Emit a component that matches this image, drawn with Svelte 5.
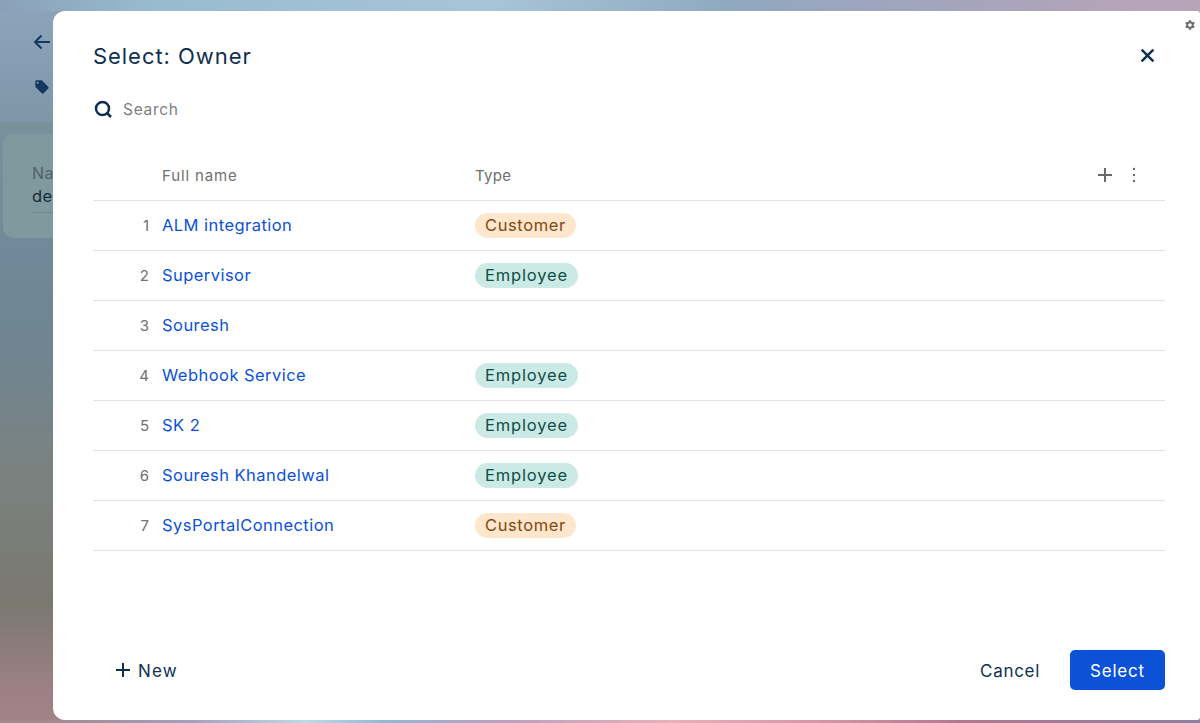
<script>
  const rows = [
    { name: 'ALM integration', type: 'Customer' },
    { name: 'Supervisor', type: 'Employee' },
    { name: 'Souresh', type: '' },
    { name: 'Webhook Service', type: 'Employee' },
    { name: 'SK 2', type: 'Employee' },
    { name: 'Souresh Khandelwal', type: 'Employee' },
    { name: 'SysPortalConnection', type: 'Customer' }
  ];
</script>

<div class="page">
  <header class="page-head">
    <svg class="back" width="20" height="20" viewBox="0 0 20 20" fill="none" stroke="#14395f" stroke-width="2">
      <path d="M18 10H3M9.500 3.500 3 10l6.500 6.500" />
    </svg>
    <svg class="tag" width="16" height="16" viewBox="0 0 24 24" fill="#14395f">
      <path d="M21.410 11.580l-9-9C12.050 2.220 11.550 2 11 2H4c-1.100 0-2 .9-2 2v7c0 .55.22 1.050.59 1.420l9 9c.36.36.86.58 1.410.58.55 0 1.050-.22 1.410-.59l7-7c.37-.36.59-.86.59-1.410 0-.55-.23-1.060-.59-1.420zM5.500 7C4.670 7 4 6.330 4 5.500S4.670 4 5.500 4 7 4.670 7 5.500 6.330 7 5.500 7z" />
    </svg>
  </header>
  <div class="page-body">
    <div class="card">
      <div class="card-label">Name</div>
      <div class="card-value">demo</div>
    </div>
  </div>

  <div class="modal">
    <div class="modal-head">
      <h2>Select: Owner</h2>
      <button class="close" title="Close" aria-label="Close">
        <svg width="15" height="15" viewBox="0 0 14 14" fill="none" stroke="#0f2f52" stroke-width="2.300">
          <path d="M1.500 1.500l11 11M12.500 1.500l-11 11" />
        </svg>
      </button>
    </div>

    <div class="search">
      <svg width="20" height="20" viewBox="0 0 20 20" fill="none" stroke="#0f2f52" stroke-width="2.500">
        <circle cx="9.500" cy="9.500" r="6.500" />
        <path d="M14 14l4 4" />
      </svg>
      <span>Search</span>
    </div>

    <div class="table">
      <div class="row head">
        <div class="num"></div>
        <div class="name">Full name</div>
        <div class="type">Type</div>
        <div class="tools">
          <svg width="16" height="16" viewBox="0 0 16 16" fill="none" stroke="#6b6b6b" stroke-width="2">
            <path d="M8 1v14M1 8h14" />
          </svg>
          <svg width="4" height="16" viewBox="0 0 4 16" fill="#6b6b6b">
            <circle cx="2" cy="2" r="1.200" />
            <circle cx="2" cy="8" r="1.200" />
            <circle cx="2" cy="14" r="1.200" />
          </svg>
        </div>
      </div>
      {#each rows as row, i}
        <div class="row">
          <div class="num">{i + 1}</div>
          <div class="name link">{row.name}</div>
          <div class="type">
            {#if row.type}
              <span class="pill" class:customer={row.type === 'Customer'} class:employee={row.type === 'Employee'}>{row.type}</span>
            {/if}
          </div>
        </div>
      {/each}
    </div>

    <div class="modal-foot">
      <button class="new">
        <svg width="16" height="16" viewBox="0 0 16 16" fill="none" stroke="#0f2f52" stroke-width="2">
          <path d="M8 1v14M1 8h14" />
        </svg>
        <span class="new-label">New</span>
      </button>
      <div class="actions">
        <button class="cancel">Cancel</button>
        <button class="select">Select</button>
      </div>
    </div>
  </div>

  <svg class="gear" width="12" height="12" viewBox="0 0 24 24" fill="#6b6b6b">
    <path d="M19.140 12.940c.04-.3.06-.61.06-.94 0-.32-.02-.64-.07-.94l2.030-1.580c.18-.14.23-.41.12-.61l-1.920-3.320c-.12-.22-.37-.29-.59-.22l-2.390.96c-.5-.38-1.030-.7-1.620-.94l-.36-2.540c-.04-.24-.24-.41-.48-.41h-3.840c-.24 0-.43.17-.47.41l-.36 2.540c-.59.24-1.130.57-1.620.94l-2.390-.96c-.22-.08-.47 0-.59.22L2.740 8.870c-.12.21-.08.47.12.61l2.030 1.580c-.05.3-.09.63-.09.94s.02.64.07.94l-2.030 1.580c-.18.14-.23.41-.12.61l1.920 3.320c.12.22.37.29.59.22l2.390-.96c.5.38 1.030.7 1.620.94l.36 2.540c.05.24.24.41.48.41h3.840c.24 0 .44-.17.47-.41l.36-2.540c.59-.24 1.130-.56 1.620-.94l2.390.96c.22.08.47 0 .59-.22l1.920-3.320c.12-.22.07-.47-.12-.61l-2.010-1.580zM12 15.600c-1.980 0-3.600-1.620-3.600-3.600s1.620-3.600 3.600-3.600 3.600 1.620 3.600 3.600-1.620 3.600-3.600 3.600z" />
  </svg>
</div>

<style>
  :global(body) {
    margin: 0;
  }

  .page {
    position: relative;
    width: 1200px;
    height: 723px;
    overflow: hidden;
    font-family: Inter, "Open Sans", sans-serif;
  }

  .page-head {
    height: 122px;
    box-sizing: border-box;
    padding: 32px 0 0 32px;
    background:
      linear-gradient(90deg, #8aa0b8 0, #98bbd0 153px, #a8c4d8 490px, #90a8c0 730px, #a8a4bc 1000px, #b8a4b8 1150px) top / 100% 11px no-repeat,
      linear-gradient(180deg, #8ea4bc 0%, #7f96a8 100%);
  }

  .back {
    display: block;
  }

  .tag {
    display: block;
    margin: 27px 0 0 2px;
  }

  .page-body {
    height: 601px;
    padding: 12px 0 0 3px;
    box-sizing: border-box;
    background:
      linear-gradient(90deg, #a08a90 50px, #a0a0c0 190px, #b8dce8 306px, #90b8d8 385px, #b8a0c0 500px, #e8b0b8 670px, #d898a8 807px, #b07890 960px, #8a80a0 1200px) bottom / 100% 3px no-repeat,
      linear-gradient(180deg, #78929c 0%, #71889a 22%, #6f8590 38%, #7a8280 58%, #7a7870 80%, #9c8085 94%, #a08488 100%);
  }

  .card {
    width: 120px;
    height: 104px;
    box-sizing: border-box;
    padding: 29px 0 0 29px;
    border-radius: 10px;
    background: #7f999f;
  }

  .card-label {
    font-size: 16px;
    letter-spacing: 0.5px;
    line-height: 20px;
    color: #50626a;
  }

  .card-value {
    font-size: 16.500px;
    letter-spacing: 0.5px;
    line-height: 20px;
    color: #16293a;
    margin-top: 3px;
    padding-bottom: 6px;
    border-bottom: 1px dotted #63787e;
  }

  .modal {
    position: absolute;
    left: 53px;
    top: 11px;
    width: 1147px;
    height: 709px;
    box-sizing: border-box;
    padding: 0 35px 0 40px;
    display: flex;
    flex-direction: column;
    background: #fff;
    border-radius: 12px 3px 3px 12px;
    color: #0f2f52;
  }

  .modal-head {
    height: 66px;
    display: flex;
    align-items: flex-end;
    justify-content: space-between;
  }

  h2 {
    margin: 0;
    font-size: 22px;
    letter-spacing: 0.95px;
    line-height: 30px;
    font-weight: 400;
    padding-bottom: 6px;
  }

  .close {
    background: none;
    border: none;
    padding: 0;
    margin: 0 10px 14px 0;
    display: flex;
  }

  .search {
    display: flex;
    align-items: center;
    gap: 10px;
    height: 32px;
    margin-top: 16px;
    color: #808080;
    font-size: 15.500px;
    letter-spacing: 0.7px;
  }

  .table {
    margin-top: 25px;
  }

  .row {
    display: flex;
    align-items: center;
    height: 49px;
    border-bottom: 1px solid #e2e2e2;
    font-size: 16.500px;
    letter-spacing: 0.45px;
  }

  .row.head {
    height: 50px;
    color: #6f6f6f;
    font-size: 15px;
    letter-spacing: 0.85px;
  }

  .num {
    width: 56px;
    text-align: right;
    color: #6f6f6f;
    font-size: 15px;
    letter-spacing: 0;
  }

  .name {
    width: 313px;
    margin-left: 13px;
    margin-top: -1px;
  }

  .head .name {
    margin-top: 0;
  }

  .link {
    color: #0b52d6;
  }

  .type {
    flex: 1;
  }

  .head .type {
    letter-spacing: 0.3px;
  }

  .tools {
    display: flex;
    align-items: center;
    gap: 19px;
    margin-right: 29px;
  }

  .pill {
    display: inline-block;
    padding: 0 10px;
    line-height: 25px;
    border-radius: 13px;
    letter-spacing: 0.6px;
  }

  .customer {
    background: #ffe6cc;
    color: #7f4a10;
  }

  .employee {
    background: #cbe9e5;
    color: #0f4f47;
    letter-spacing: 0.85px;
  }

  .modal-foot {
    margin-top: auto;
    height: 70px;
    display: flex;
    align-items: flex-start;
    justify-content: space-between;
  }

  button {
    font: inherit;
    cursor: pointer;
  }

  .new {
    display: flex;
    align-items: center;
    gap: 7px;
    height: 40px;
    padding: 0 0 0 22px;
    background: none;
    border: none;
    color: #0f2f52;
    font-size: 17px;
    letter-spacing: 1.2px;
  }

  .new-label {
    padding-top: 2px;
  }

  .actions {
    display: flex;
    align-items: center;
    gap: 30px;
  }

  .cancel {
    background: none;
    border: none;
    color: #0f2f52;
    font-size: 17px;
    letter-spacing: 0.7px;
    padding: 2px 0 0;
  }

  .select {
    width: 95px;
    height: 40px;
    padding: 2px 0 0;
    background: #0b52d6;
    color: #fff;
    border: none;
    border-radius: 5px;
    font-size: 17px;
    letter-spacing: 0.8px;
  }

  .gear {
    position: absolute;
    top: 19px;
    right: 4px;
  }
</style>
